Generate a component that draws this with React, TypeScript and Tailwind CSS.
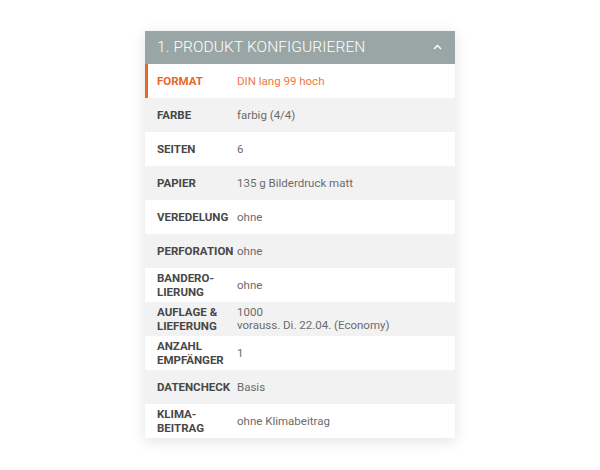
import React from "react";

type Row = { label: string[]; value: string[]; active?: boolean };

const rows: Row[] = [
  { label: ["FORMAT"], value: ["DIN lang 99 hoch"], active: true },
  { label: ["FARBE"], value: ["farbig (4/4)"] },
  { label: ["SEITEN"], value: ["6"] },
  { label: ["PAPIER"], value: ["135 g Bilderdruck matt"] },
  { label: ["VEREDELUNG"], value: ["ohne"] },
  { label: ["PERFORATION"], value: ["ohne"] },
  { label: ["BANDERO-", "LIERUNG"], value: ["ohne"] },
  { label: ["AUFLAGE &", "LIEFERUNG"], value: ["1000", "vorauss. Di. 22.04. (Economy)"] },
  { label: ["ANZAHL", "EMPFÄNGER"], value: ["1"] },
  { label: ["DATENCHECK"], value: ["Basis"] },
  { label: ["KLIMA-", "BEITRAG"], value: ["ohne Klimabeitrag"] },
];

export default function App() {
  return (
    <div
      className="w-[600px] h-[470px] bg-white flex justify-center pt-[31px]"
      style={{ fontFamily: "Roboto, 'Liberation Sans', sans-serif" }}
    >
      <div className="w-[310px] self-start bg-white shadow-[0_3px_14px_rgba(0,0,0,0.12)]">
        <div className="h-[33px] bg-[#99a6a5] flex items-center justify-between pl-[12px] pr-[13px]">
          <span className="text-white text-[15.5px] font-light tracking-[0.1px]">
            1. PRODUKT KONFIGURIEREN
          </span>
          <svg width="9" height="6" viewBox="0 0 9 6" className="mb-[1px]">
            <path d="M1 5 L4.5 1.5 L8 5" fill="none" stroke="#ffffff" strokeWidth="1.4" />
          </svg>
        </div>
        {rows.map((r, i) => (
          <div
            key={i}
            className={
              "h-[34px] flex items-center " +
              (i % 2 === 1 ? "bg-[#f2f2f2]" : "bg-white") +
              (r.active ? " border-l-[3px] border-[#e8682a] pl-[9px]" : " pl-[12px]")
            }
          >
            <div
              className={
                "w-[80px] shrink-0 text-[11.5px] font-bold leading-[14px] " +
                (r.active ? "text-[#e8682a]" : "text-[#474747]")
              }
            >
              {r.label.map((l, j) => (
                <div key={j}>{l}</div>
              ))}
            </div>
            <div
              className={
                "text-[11.5px] leading-[13px] " +
                (r.active ? "text-[#ec7a45]" : "text-[#6b6b6b]")
              }
            >
              {r.value.map((v, j) => (
                <div key={j}>{v}</div>
              ))}
            </div>
          </div>
        ))}
      </div>
    </div>
  );
}
